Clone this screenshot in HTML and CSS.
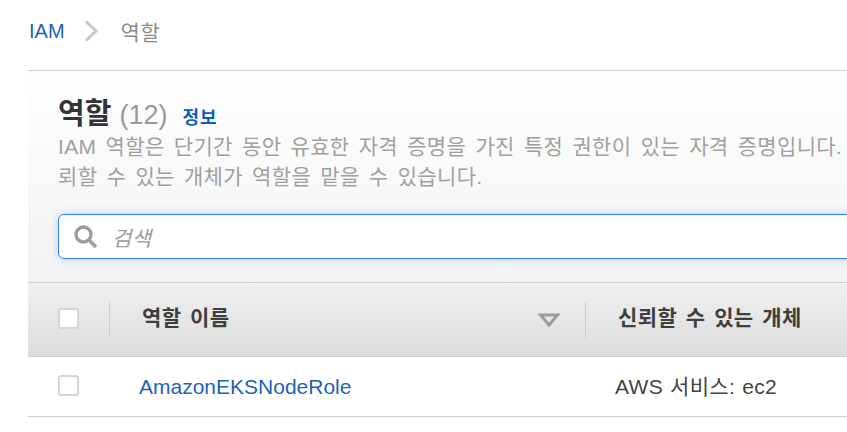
FILE: index.html
```html
<!DOCTYPE html>
<html lang="ko">
<head>
    <meta charset="UTF-8">
    <meta name="viewport" content="width=device-width, initial-scale=1.0">
    <title>역할</title>
    <link rel="stylesheet" href="styles.css">
</head>
<body>
    <div class="page">
        <!-- 경로 -->
        <nav class="breadcrumb">
            <a class="crumb-link">IAM</a>
            <svg class="crumb-arrow" width="14" height="22" viewBox="0 0 14 22">
                <path d="M2 1.5 L12 11 L2 20.5" fill="none" stroke="#c8c8c8" stroke-width="3"/>
            </svg>
            <span class="crumb-current">역할</span>
        </nav>

        <section class="panel">
            <div class="panel-header">
                <h1 class="title">역할 <span class="count">(12)</span> <a class="info">정보</a></h1>
                <p class="desc">IAM 역할은 단기간 동안 유효한 자격 증명을 가진 특정 권한이 있는 자격 증명입니다.<br>뢰할 수 있는 개체가 역할을 맡을 수 있습니다.</p>
                <div class="search">
                    <svg class="search-icon" width="23" height="23" viewBox="0 0 23 23">
                        <circle cx="9.5" cy="9.5" r="7.5" fill="none" stroke="#9c9c9c" stroke-width="3.4"/>
                        <path d="M15 15 L22 22" stroke="#9c9c9c" stroke-width="3.6"/>
                    </svg>
                    <span class="search-text">검색</span>
                </div>
            </div>

            <div class="table-head">
                <div class="cell-check"><span class="checkbox"></span></div>
                <div class="cell-name head-name">
                    <span class="head-label">역할 이름</span>
                    <svg class="sort-icon" width="22" height="14" viewBox="0 0 22 14">
                        <path d="M2.5 2 H19.5 L11 12 Z" fill="none" stroke="#9c9c9c" stroke-width="3"/>
                    </svg>
                </div>
                <div class="cell-trust head-trust"><span class="head-label">신뢰할 수 있는 개체</span></div>
            </div>

            <div class="table-row">
                <div class="cell-check"><span class="checkbox"></span></div>
                <div class="cell-name"><a class="role-link">AmazonEKSNodeRole</a></div>
                <div class="cell-trust">AWS 서비스: ec2</div>
            </div>
        </section>
    </div>
</body>
</html>
```

FILE: styles.css
```css
html, body {
    margin: 0;
    height: 100%;
    overflow: hidden;
    background: #fff;
}
body {
    font-family: 'Liberation Sans', 'Noto Sans CJK KR', sans-serif;
    font-size: 21px;
    color: #444;
}
.page {
    width: 1300px;
    padding-left: 28px;
}
.breadcrumb {
    display: flex;
    align-items: center;
    height: 71px;
    padding-bottom: 8px;
    padding-left: 1px;
    box-sizing: border-box;
    border-bottom: 1px solid #cfcfcf;
}
.crumb-link {
    font-size: 20px;
    color: #1f62b8;
}
.crumb-arrow {
    margin: 0 23px 0 19px;
}
.crumb-current {
    letter-spacing: 0.5px;
    color: #8b8b8b;
}
.panel-header {
    height: 212px;
    padding: 29px 0 0 30px;
    box-sizing: border-box;
    background: linear-gradient(#fff, #f1f2f3);
    border-bottom: 1px solid #cfcfcf;
}
.title {
    margin: 0;
    font-size: 29px;
    font-weight: bold;
    line-height: 28px;
    color: #333;
}
.count {
    font-size: 27px;
    font-weight: normal;
    color: #999;
}
.info {
    margin-left: 7px;
    font-size: 18px;
    letter-spacing: 1px;
    color: #0f5fb8;
}
.desc {
    margin: 0;
    line-height: 30px;
    letter-spacing: 0.35px;
    word-spacing: 3px;
    color: #a0a0a0;
    white-space: nowrap;
}
.search {
    display: flex;
    align-items: center;
    width: 1200px;
    height: 45px;
    margin-top: 22px;
    padding-left: 15px;
    box-sizing: border-box;
    background: #fff;
    border: 1px solid #2f88e8;
    border-radius: 6px;
    box-shadow: 0 0 8px rgba(47, 136, 232, 0.3);
}
.search-icon {
    margin-right: 15px;
}
.search-text {
    font-style: italic;
    letter-spacing: 0.4px;
    color: #9c9c9c;
}
.table-head, .table-row {
    display: flex;
    align-items: center;
    box-sizing: border-box;
    line-height: 24px;
    border-bottom: 1px solid #cfcfcf;
}
.table-head {
    height: 74px;
    font-weight: bold;
    color: #3f3f3f;
    background: linear-gradient(#f0f0f0, #dcdcdc);
}
.table-row {
    height: 60px;
}
.cell-check {
    width: 82px;
    padding-left: 30px;
    padding-bottom: 3px;
    box-sizing: border-box;
    display: flex;
}
.table-row .cell-check {
    padding-bottom: 2px;
}
.cell-name {
    width: 476px;
    box-sizing: border-box;
    padding-left: 29px;
}
.cell-trust {
    padding-left: 29px;
    letter-spacing: 0.3px;
    word-spacing: 1px;
}
.head-name {
    display: flex;
    align-items: center;
    justify-content: space-between;
    height: 36px;
    padding-left: 32px;
    padding-right: 25px;
    border-left: 1px solid #cccccc;
    margin-left: -1px;
}
.head-trust {
    display: flex;
    align-items: center;
    height: 36px;
    padding-left: 32px;
    border-left: 1px solid #cccccc;
}
.head-label {
    margin-bottom: 3px;
    letter-spacing: 0.4px;
    word-spacing: 2.4px;
}
.checkbox {
    display: block;
    width: 17px;
    height: 17px;
    background: #fff;
    border: 2px solid #d5d5d5;
    border-radius: 3px;
}
.role-link {
    color: #1f62b8;
}
```
